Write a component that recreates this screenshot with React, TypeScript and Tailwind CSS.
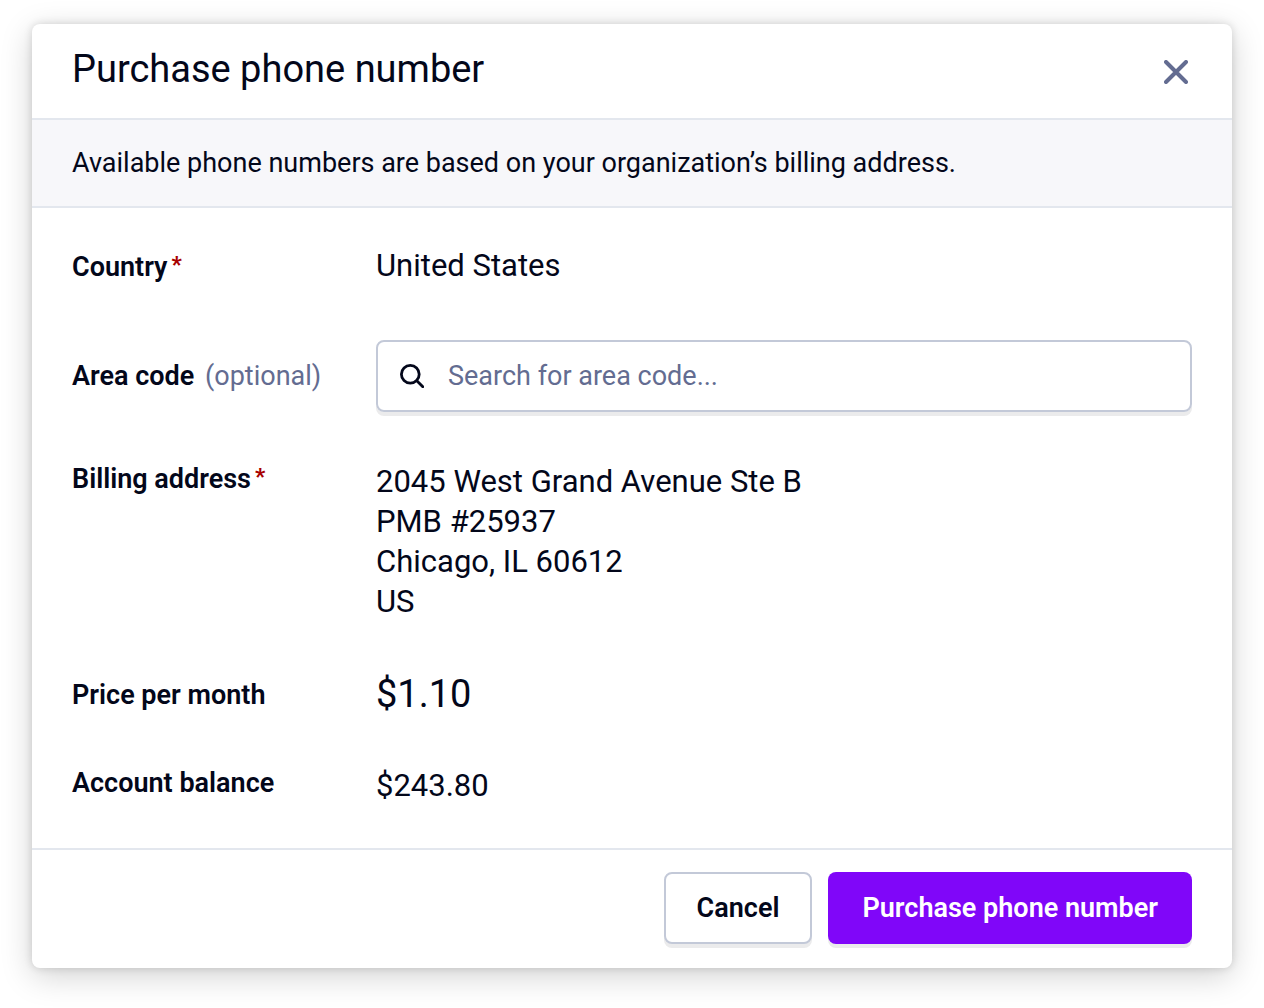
import type { ReactNode } from "react";

function Required() {
  return (
    <span
      className="ml-1 align-[4px] text-[22px] leading-none font-black text-[#a80000]"
      aria-label="required"
    >
      *
    </span>
  );
}

function Row({ label, children }: { label: ReactNode; children: ReactNode }) {
  return (
    <div className="grid grid-cols-[304px_1fr]">
      <dt className="text-[27px] leading-[38px] font-semibold">{label}</dt>
      <dd className="text-[31px] leading-10">{children}</dd>
    </div>
  );
}

function CloseIcon() {
  return (
    <svg viewBox="0 0 24 24" className="size-6" fill="none" aria-hidden="true">
      <path
        d="M2 2L22 22M22 2L2 22"
        stroke="currentColor"
        strokeWidth="4"
        strokeLinecap="round"
      />
    </svg>
  );
}

function SearchIcon() {
  return (
    <svg viewBox="0 0 24 24" className="size-6 shrink-0" fill="none" aria-hidden="true">
      <circle cx="10.3" cy="10.3" r="8.9" stroke="currentColor" strokeWidth="2.8" />
      <path
        d="M16.8 16.8L22.8 22.8"
        stroke="currentColor"
        strokeWidth="2.8"
        strokeLinecap="round"
      />
    </svg>
  );
}

export default function App() {
  return (
    <main className="min-h-screen bg-white px-8 py-6 font-['Roboto',sans-serif] text-[#03071a]">
      <section
        role="dialog"
        aria-labelledby="dialog-title"
        className="rounded-lg bg-white shadow-[0_0_8px_rgba(0,0,0,0.14),0_8px_32px_rgba(0,0,0,0.18)]"
      >
        <header className="flex items-end justify-between border-b-2 border-[#e3e7ee] px-10 pt-5 pb-6">
          <h1 id="dialog-title" className="text-[38px] leading-[50px]">
            Purchase phone number
          </h1>
          <button type="button" aria-label="Close" className="mb-1.5 p-1 text-[#636c91]">
            <CloseIcon />
          </button>
        </header>

        <p className="border-b-2 border-[#e3e7ee] bg-[#f7f7fa] px-10 py-6 text-[27px] leading-[38px]">
          Available phone numbers are based on your organization’s billing address.
        </p>

        <form>
          <dl className="flex flex-col gap-12 px-10 pt-[38px] pb-[42px]">
            <Row
              label={
                <div className="pt-0.5">
                  Country
                  <Required />
                </div>
              }
            >
              <div className="pb-1.5">United States</div>
            </Row>

            <div className="grid grid-cols-[304px_1fr] items-center">
              <dt className="text-[27px] leading-[38px] font-semibold">
                <label htmlFor="area-code">
                  Area code{" "}
                  <span className="ml-1 font-normal text-[#636c91]">(optional)</span>
                </label>
              </dt>
              <dd className="flex h-[72px] items-center gap-6 rounded-lg border-2 border-[#c3c9d8] px-[22px] shadow-[0_4px_0_#ebebec]">
                <SearchIcon />
                <input
                  id="area-code"
                  type="text"
                  placeholder="Search for area code..."
                  className="min-w-0 flex-1 bg-transparent text-[27px] leading-10 outline-none placeholder:text-[#636c91]"
                />
              </dd>
            </div>

            <Row
              label={
                <>
                  Billing address
                  <Required />
                </>
              }
            >
              <address className="pt-0.5 not-italic">
                2045 West Grand Avenue Ste B
                <br />
                PMB #25937
                <br />
                Chicago, IL 60612
                <br />
                US
              </address>
            </Row>

            <Row label={<div className="pt-1.5">Price per month</div>}>
              <div className="pt-0.5 text-[38px] leading-11">$1.10</div>
            </Row>

            <Row label="Account balance">
              <div className="pt-0.5">$243.80</div>
            </Row>
          </dl>

          <footer className="flex justify-end gap-4 border-t-2 border-[#e3e7ee] px-10 pt-[22px] pb-6">
            <button
              type="button"
              className="h-[72px] rounded-lg border-2 border-[#c3c9d8] bg-white px-[31px] text-[27px] font-semibold shadow-[0_4px_0_#ebebec]"
            >
              Cancel
            </button>
            <button
              type="submit"
              className="h-[72px] rounded-lg bg-[#8006f9] px-[34px] text-[27px] font-semibold text-white shadow-[0_4px_0_#ebebec]"
            >
              Purchase phone number
            </button>
          </footer>
        </form>
      </section>
    </main>
  );
}
